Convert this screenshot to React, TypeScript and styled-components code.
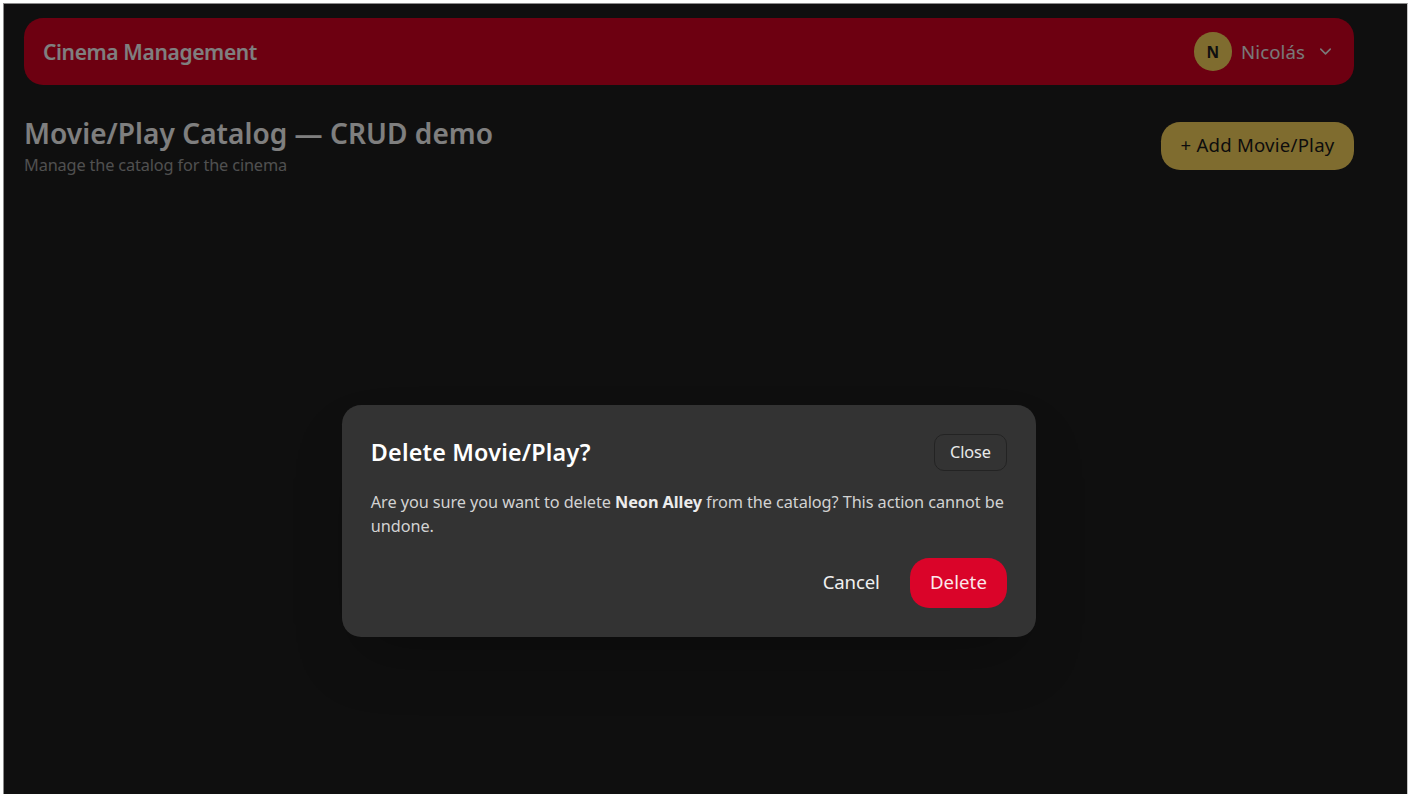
import React from "react";
import styled, { createGlobalStyle } from "styled-components";
import { ChevronDown } from "lucide-react";

const GlobalStyle = createGlobalStyle`
  * { box-sizing: border-box; }
  body {
    margin: 0;
    background: #fdfefd;
    font-family: "Noto Sans", "Open Sans", sans-serif;
  }
  button { font-family: inherit; margin: 0; cursor: pointer; }
  h1, h2, p { margin: 0; }
`;

const Frame = styled.div`
  width: 1408px;
  height: 796px;
  padding: 3px 0 1px 3px;
  overflow: hidden;
`;

const Screen = styled.div`
  position: relative;
  height: 791px;
  width: 1405px;
  border: 1px solid #8a8a8a;
  border-right-color: #c4c4c4;
  border-bottom: 0;
  background: #1e1e1e;
  overflow: hidden;
`;

const Page = styled.div`
  width: 1370px;
  padding: 14px 20px 0;
`;

const TopBar = styled.header`
  display: flex;
  align-items: center;
  justify-content: space-between;
  height: 67.2px;
  padding: 0 19px;
  border-radius: 19.2px;
  background: #da0022;
  color: #fff;
`;

const Brand = styled.span`
  font-size: 21px;
  font-weight: 600;
  line-height: 30px;
  letter-spacing: -0.365px;
`;

const UserMenu = styled.div`
  display: flex;
  align-items: center;
  font-size: 18.6px;
  line-height: 26px;
  letter-spacing: 0.109px;
  color: #f2f2f2;
`;

const Avatar = styled.span`
  display: grid;
  place-items: center;
  width: 38.4px;
  height: 38.4px;
  margin-right: 9px;
  border-radius: 50%;
  background: #ffd85e;
  color: #1e1e1e;
  font-size: 15.5px;
  font-weight: 700;
`;

const Caret = styled(ChevronDown)`
  margin-left: 11px;
`;

const PageHeading = styled.section`
  display: flex;
  align-items: center;
  justify-content: space-between;
  margin-top: 27px;
`;

const Title = styled.h1`
  padding-top: 3px;
  font-size: 28px;
  font-weight: 600;
  line-height: 36px;
  letter-spacing: 0.05px;
  color: #fff;
`;

const Subtitle = styled.p`
  padding-top: 2px;
  font-size: 16.3px;
  line-height: 24px;
  letter-spacing: -0.137px;
  color: #a0a0a0;
`;

const AddButton = styled.button`
  height: 48px;
  width: 193px;
  margin-top: 2px;
  padding: 0 0 2px;
  border: 0;
  border-radius: 19.2px;
  background: #ffd85e;
  color: #1a1a1a;
  font-size: 18.6px;
  letter-spacing: 0.225px;
`;

const Overlay = styled.div`
  position: absolute;
  inset: 0;
  display: flex;
  align-items: flex-start;
  justify-content: center;
  padding: 401.4px 33px 0 0;
  background: rgba(0, 0, 0, 0.5);
`;

const Dialog = styled.div`
  width: 694px;
  height: 231.6px;
  padding: 28.8px;
  border-radius: 19.2px;
  background: #333;
  box-shadow: 0 30px 60px -14.4px rgba(0, 0, 0, 0.25);
`;

const DialogHeader = styled.div`
  display: flex;
  align-items: center;
  justify-content: space-between;
`;

const DialogTitle = styled.h2`
  font-size: 23.3px;
  font-weight: 600;
  line-height: 34px;
  letter-spacing: 0.201px;
  color: #fff;
`;

const CloseButton = styled.button`
  width: 73.5px;
  height: 36.5px;
  padding: 0 0 1px;
  border: 1px solid #232323;
  border-radius: 10px;
  background: transparent;
  color: #eaeaea;
  font-size: 16.3px;
  letter-spacing: -0.06px;
`;

const Message = styled.p`
  margin-top: 19px;
  font-size: 16.3px;
  line-height: 24px;
  letter-spacing: -0.08px;
  color: #d2d2d2;

  strong {
    font-weight: 700;
    letter-spacing: -0.061px;
    color: #ececec;
  }
`;

const Actions = styled.div`
  display: flex;
  justify-content: flex-end;
  gap: 10px;
  margin-top: 20px;
`;

const ActionButton = styled.button<{ $danger?: boolean }>`
  width: ${(p) => (p.$danger ? "97.5px" : "97px")};
  height: 50.4px;
  padding: 0 0 2px;
  border: 0;
  border-radius: 19.2px;
  background: ${(p) => (p.$danger ? "#da0429" : "transparent")};
  color: ${(p) => (p.$danger ? "#fbe8eb" : "#f0f0f0")};
  font-size: 18.6px;
  letter-spacing: ${(p) => (p.$danger ? "0.076px" : "-0.147px")};
`;

export default function App() {
  return (
    <Frame>
      <GlobalStyle />
      <Screen>
        <Page>
          <TopBar>
            <Brand>Cinema Management</Brand>
            <UserMenu>
              <Avatar>N</Avatar>
              Nicolás
              <Caret size={19} strokeWidth={2} />
            </UserMenu>
          </TopBar>
          <PageHeading>
            <div>
              <Title>Movie/Play Catalog — CRUD demo</Title>
              <Subtitle>Manage the catalog for the cinema</Subtitle>
            </div>
            <AddButton>+ Add Movie/Play</AddButton>
          </PageHeading>
        </Page>
        <Overlay>
          <Dialog role="dialog" aria-modal="true">
            <DialogHeader>
              <DialogTitle>Delete Movie/Play?</DialogTitle>
              <CloseButton>Close</CloseButton>
            </DialogHeader>
            <Message>
              Are you sure you want to delete <strong>Neon Alley</strong> from the catalog? This action cannot be
              undone.
            </Message>
            <Actions>
              <ActionButton>Cancel</ActionButton>
              <ActionButton $danger>Delete</ActionButton>
            </Actions>
          </Dialog>
        </Overlay>
      </Screen>
    </Frame>
  );
}
